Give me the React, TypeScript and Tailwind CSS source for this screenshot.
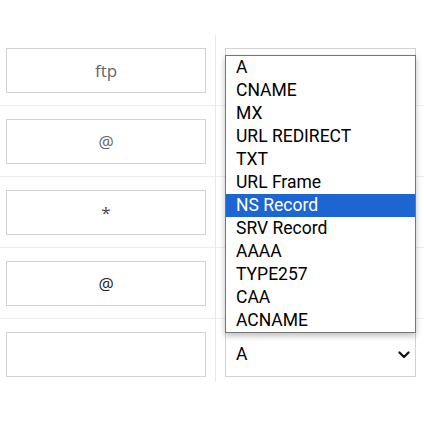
import React from 'react';

const hosts = [
  { value: 'ftp', color: 'text-[#666666]' },
  { value: '@', color: 'text-[#666666]' },
  { value: '*', color: 'text-[#444444]' },
  { value: '@', color: 'text-[#222222]' },
  { value: '', color: 'text-[#222222]' },
];

const recordTypes = [
  'A',
  'CNAME',
  'MX',
  'URL REDIRECT',
  'TXT',
  'URL Frame',
  'NS Record',
  'SRV Record',
  'AAAA',
  'TYPE257',
  'CAA',
  'ACNAME',
];

function Chevron() {
  return (
    <svg width="12" height="8" viewBox="0 0 12 8" fill="none">
      <path d="M1.5 1.5 L6 6 L10.5 1.5" stroke="#111" strokeWidth="2.2" strokeLinecap="round" strokeLinejoin="round" />
    </svg>
  );
}

// rows under the open list only show their box edges, so the value is drawn on the last one
function RecordRow({ host, color, last }: { host: string; color: string; last: boolean }) {
  return (
    <div className={`flex ${last ? '' : 'border-b border-[#ececec]'}`}>
      <div className={`w-[216px] shrink-0 border-r border-[#e8e8e8] pl-[6px] pr-[10px] pt-[13px] ${last ? 'pb-[5px]' : 'pb-[12px]'}`}>
        <div
          className={`h-[45px] w-[200px] border border-[#d2d2d2] bg-white flex items-center justify-center text-[17px] ${color}`}
          style={{ fontFamily: '"Open Sans", "Noto Sans", sans-serif' }}
        >
          {host}
        </div>
      </div>
      <div className="flex-1 pl-[9px] pr-[9px] pt-[13px]">
        <div
          className="h-[45px] w-[191px] border border-[#d2d2d2] bg-white flex items-center justify-between pl-[10px] pr-[5px] text-[17.5px] text-black"
          style={{ fontFamily: 'Roboto, "Liberation Sans", sans-serif' }}
        >
          {last ? (
            <>
              <span>A</span>
              <Chevron />
            </>
          ) : null}
        </div>
      </div>
    </div>
  );
}

function DropdownList() {
  return (
    <div
      className="absolute left-[225px] top-[55px] w-[191px] border border-[#767676] bg-white shadow-[0_3px_6px_rgba(0,0,0,0.25)] text-[17.5px] text-black"
      style={{ fontFamily: 'Roboto, "Liberation Sans", sans-serif' }}
    >
      {recordTypes.map((t) => (
        <div
          key={t}
          className={`h-[23px] leading-[23px] pl-[10px] whitespace-nowrap ${t === 'NS Record' ? 'bg-[#1d66d2] text-white' : ''}`}
        >
          {t}
        </div>
      ))}
    </div>
  );
}

export default function App() {
  return (
    <div className="relative w-[424px] h-[424px] bg-white overflow-hidden">
      <div className="pt-[35px]">
        {hosts.map((h, i) => (
          <RecordRow key={i} host={h.value} color={h.color} last={i === hosts.length - 1} />
        ))}
      </div>
      <DropdownList />
    </div>
  );
}
